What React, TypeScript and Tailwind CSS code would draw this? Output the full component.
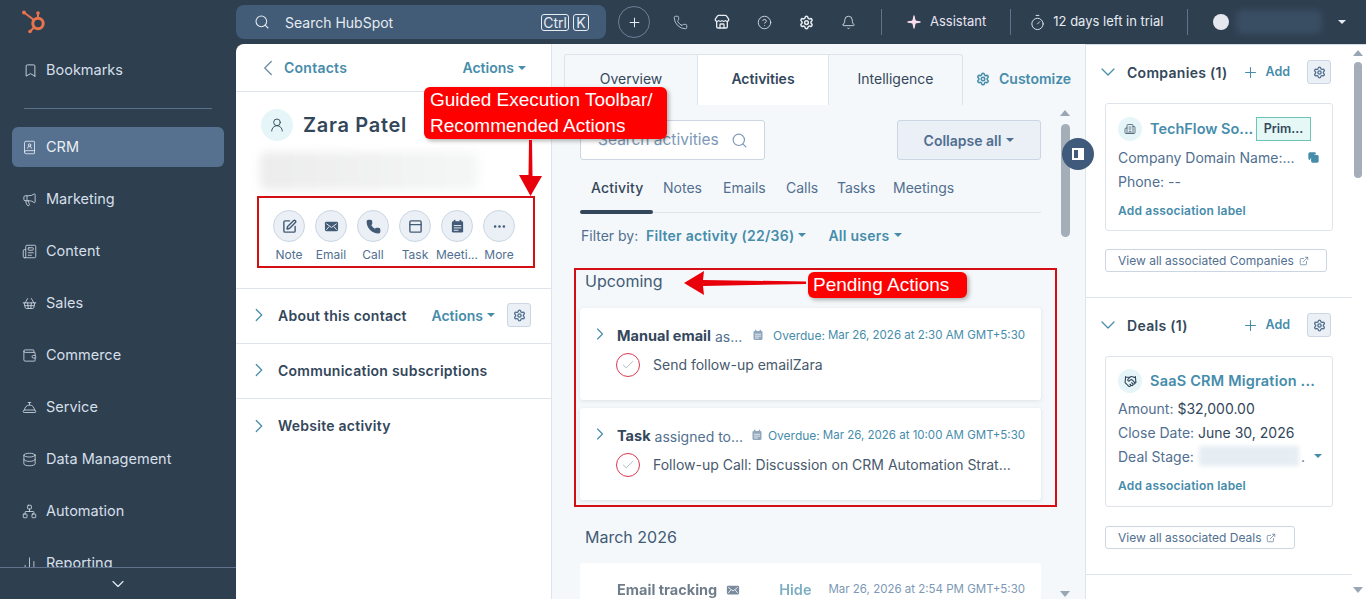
import React from 'react';
import {
  Bookmark, BookUser, Megaphone, Newspaper, ShoppingBasket, Wallet, ConciergeBell, Database, Network, ChartNoAxesColumn,
  ChevronDown, ChevronLeft, ChevronRight, Search, Plus, Phone, Store, CircleHelp, Settings, Bell, Timer, UserRound,
  SquarePen, Mail, Ellipsis, Check, Building2, Handshake, Copy, ExternalLink, Sparkle, PanelTop,
} from 'lucide-react';

const navItems = [
  { label: 'CRM', icon: BookUser, active: true },
  { label: 'Marketing', icon: Megaphone },
  { label: 'Content', icon: Newspaper },
  { label: 'Sales', icon: ShoppingBasket },
  { label: 'Commerce', icon: Wallet },
  { label: 'Service', icon: ConciergeBell },
  { label: 'Data Management', icon: Database },
  { label: 'Automation', icon: Network },
  { label: 'Reporting', icon: ChartNoAxesColumn },
];

const MailSolid = ({ size = 15 }: { size?: number }) => (
  <svg width={size} height={size} viewBox="0 0 16 16">
    <rect x="1" y="3" width="14" height="10" rx="1.5" fill="#425b76" />
    <path d="M2.5 5 L8 9 L13.5 5 M2.5 11.5 L5.5 8 M13.5 11.5 L10.5 8" fill="none" stroke="#eaf0f6" strokeWidth="1" />
  </svg>
);

const PhoneSolid = () => <Phone size={15} strokeWidth={2} fill="#425b76" className="text-[#425b76]" />;
const NoteIcon = () => <SquarePen size={15} strokeWidth={2.3} className="text-[#425b76]" />;
const TaskIcon = () => <PanelTop size={15} strokeWidth={2.2} className="text-[#425b76]" />;

const CalendarSolid = ({ size = 15, color = '#425b76', paper = '#eaf0f6' }: { size?: number; color?: string; paper?: string }) => (
  <svg width={size} height={size} viewBox="0 0 16 16">
    <rect x="4" y="1" width="1.8" height="3" fill={color} />
    <rect x="10.2" y="1" width="1.8" height="3" fill={color} />
    <rect x="2" y="2.5" width="12" height="12" rx="1.5" fill={color} />
    <path d="M4 7 H12 M4 9.5 H12 M4 12 H9" stroke={paper} strokeWidth="1" />
  </svg>
);

const quickActions = [
  { label: 'Note', icon: <NoteIcon /> },
  { label: 'Email', icon: <MailSolid /> },
  { label: 'Call', icon: <PhoneSolid /> },
  { label: 'Task', icon: <TaskIcon /> },
  { label: 'Meeti...', icon: <CalendarSolid /> },
  { label: 'More', icon: <Ellipsis size={15} strokeWidth={2.2} className="text-[#425b76]" /> },
];

const Caret = ({ className = 'border-t-[#468cab]' }: { className?: string }) => (
  <span className={`inline-block w-0 h-0 border-x-[4px] border-x-transparent border-t-[4px] ${className}`} />
);

const ScrollUp = () => <span className="block w-0 h-0 border-x-[5px] border-x-transparent border-b-[6px] border-b-[#99a6b3]" />;
const ScrollDown = () => <span className="block w-0 h-0 border-x-[5px] border-x-transparent border-t-[6px] border-t-[#99a6b3]" />;

const GearBox = () => (
  <div className="w-[24px] h-[24px] rounded-[3px] bg-[#eaf0f6] border border-[#cbd6e2] flex items-center justify-center">
    <Settings size={13} strokeWidth={2.5} className="text-[#516f90]" />
  </div>
);

const Sidebar = () => (
  <aside className="w-[236px] h-[599px] shrink-0 flex flex-col">
    <div className="h-[44px] shrink-0 pl-[20px] pt-[8px]">
      <svg width="28" height="28" viewBox="20 8 28 28" fill="none" stroke="#e9744c" strokeWidth="2">
        <circle cx="38" cy="23.5" r="5.2" strokeWidth="3" />
        <path d="M24 12.5 L34 20" />
        <path d="M38 13 V18" />
        <path d="M30 31.5 L34.5 27" />
        <circle cx="24" cy="12.5" r="2" fill="#e9744c" stroke="none" />
        <circle cx="38" cy="13" r="1.8" fill="#e9744c" stroke="none" />
        <circle cx="30" cy="31.5" r="1.8" fill="#e9744c" stroke="none" />
      </svg>
    </div>
    <div className="flex-1 min-h-0 overflow-hidden">
      <div className="h-[52px] pl-[23px] flex items-center gap-[8px] text-[#d5dfe9]">
        <Bookmark size={15} strokeWidth={1.4} className="shrink-0" />
        <span className="text-[14.5px]">Bookmarks</span>
      </div>
      <div className="mx-[24px] mt-[12px] mb-[18px] h-px bg-[#5a718a]" />
      <div className="flex flex-col gap-[12px] px-[12px]">
        {navItems.map(({ label, icon: Icon, active }) => (
          <div
            key={label}
            className={`h-[40px] shrink-0 rounded-[6px] pl-[10px] flex items-center gap-[9px] text-[14.5px] ${active ? 'bg-[#56708f] text-[#e9eff5]' : 'text-[#d5dfe9]'}`}
          >
            <Icon size={15} strokeWidth={1.3} className="shrink-0" />
            <span>{label}</span>
          </div>
        ))}
      </div>
    </div>
    <div className="h-[32px] shrink-0 border-t border-[#5f748c] flex items-center justify-center">
      <ChevronDown size={20} strokeWidth={1.4} className="text-[#e4ebf2]" />
    </div>
  </aside>
);

const TopBar = () => (
  <header className="h-[44px] shrink-0 flex items-center text-[#e6ecf2]">
    <div className="w-[370px] h-[34px] rounded-[8px] bg-[#425b76] flex items-center pl-[18px] pr-[17px]">
      <Search size={16} strokeWidth={1.6} />
      <span className="ml-[15px] text-[14px] flex-1">Search HubSpot</span>
      <span className="border border-[#e6ecf2] rounded-[3px] h-[17px] px-[1px] text-[14px] leading-[15px]">Ctrl</span>
      <span className="ml-[4px] border border-[#e6ecf2] rounded-[3px] h-[17px] w-[16px] text-center text-[14px] leading-[15px]">K</span>
    </div>
    <div className="ml-[12px] w-[32px] h-[32px] rounded-full border border-[#6b8199] flex items-center justify-center">
      <Plus size={15} strokeWidth={1.6} />
    </div>
    <Phone size={15} strokeWidth={1.3} className="ml-[23px] text-[#cfdae5]" />
    <Store size={16} strokeWidth={2} className="ml-[26px]" />
    <CircleHelp size={15} strokeWidth={1.4} className="ml-[27px] text-[#dbe4ed]" />
    <Settings size={15} strokeWidth={2.4} className="ml-[27px]" />
    <Bell size={15} strokeWidth={1.3} className="ml-[27px]" />
    <div className="ml-[25px] w-px h-[26px] bg-[#5f748c]" />
    <Sparkle size={16} fill="#fbdcec" strokeWidth={0} className="ml-[24px]" />
    <span className="ml-[8px] text-[13px] text-[#e8e4f0]">Assistant</span>
    <div className="ml-[24px] w-px h-[26px] bg-[#5f748c]" />
    <Timer size={17} strokeWidth={1.3} className="ml-[18px]" />
    <span className="ml-[7px] text-[13px]">12 days left in trial</span>
    <div className="ml-[24px] w-px h-[26px] bg-[#5f748c]" />
    <div className="ml-[25px] w-[16px] h-[16px] rounded-full bg-[#e4e8ee]" />
    <div className="ml-[7px] w-[86px] h-[24px] rounded-[6px] bg-[#3a4e63] blur-[3px]" />
    <Caret className="ml-[16px] border-t-[#e6ecf2]" />
  </header>
);

const RowChevron = () => <ChevronRight size={22} strokeWidth={1.3} className="shrink-0 text-[#468cab]" />;

const AccordionRow = ({ label, children }: { label: string; children?: React.ReactNode }) => (
  <div className="h-[55px] border-b border-[#dfe3eb] pl-[12px] pr-[20px] pb-[2px] flex items-center">
    <RowChevron />
    <span className="ml-[8px] text-[14px] font-semibold text-[#33475b] flex-1 tracking-[0.25px]">{label}</span>
    {children}
  </div>
);

const ContactPanel = () => (
  <section className="w-[316px] shrink-0 border-r border-[#dfe3eb] bg-white">
    <div className="h-[48px] border-b border-[#dfe3eb] pl-[19px] pr-[25px] flex items-center">
      <ChevronLeft size={26} strokeWidth={1.2} className="text-[#6a8ba3]" />
      <span className="ml-[3px] text-[14px] font-semibold text-[#468cab] flex-1 tracking-[0.25px]">Contacts</span>
      <span className="text-[14px] font-semibold text-[#468cab] mr-[4px]">Actions</span>
      <Caret />
    </div>
    <div className="pl-[25px] pt-[17px] flex items-center">
      <div className="w-[32px] h-[32px] rounded-full bg-[#e5f5f8] flex items-center justify-center">
        <UserRound size={16} strokeWidth={1.4} className="text-[#33475b]" />
      </div>
      <h1 className="ml-[10px] text-[20px] font-semibold text-[#33475b] tracking-[0.7px]">Zara Patel</h1>
    </div>
    <div className="ml-[24px] mt-[11px] h-[38px] w-[218px] bg-gradient-to-r from-[#ececec] to-[#f5f6f6] blur-[5px] rounded-[6px]" />
    <div className="mt-[20px] pl-[37px] flex gap-[10px] h-[78px]">
      {quickActions.map(({ label, icon }) => (
        <div key={label} className="w-[32px] flex flex-col items-center">
          <div className="w-[32px] h-[32px] shrink-0 rounded-full bg-[#eaf0f6] border border-[#cbd6e2] flex items-center justify-center">
            {icon}
          </div>
          <span className="mt-[4px] text-[12px] text-[#516f90] whitespace-nowrap">{label}</span>
        </div>
      ))}
    </div>
    <div className="border-t border-[#dfe3eb]" />
    <AccordionRow label="About this contact">
      <span className="text-[14px] font-semibold text-[#468cab] mr-[4px]">Actions</span>
      <Caret />
      <div className="ml-[12px]"><GearBox /></div>
    </AccordionRow>
    <AccordionRow label="Communication subscriptions" />
    <div className="h-[55px] pl-[12px] pb-[2px] flex items-center">
      <RowChevron />
      <span className="ml-[8px] text-[14px] font-semibold text-[#33475b] tracking-[0.25px]">Website activity</span>
    </div>
  </section>
);

const TaskCard = ({ title, rest, calGap, date, task }: { title: string; rest: string; calGap: string; date: string; task: string }) => (
  <div className="h-[92px] rounded-[3px] bg-white shadow-[0_1px_4px_rgba(45,62,80,0.12)] pl-[10px] pr-[16px] pt-[18px]">
    <div className="h-[20px] flex items-center whitespace-nowrap">
      <ChevronRight size={20} strokeWidth={1.4} className="shrink-0 -mt-[4px] text-[#468cab]" />
      <span className="ml-[7px] text-[14.5px] font-bold text-[#33475b]">{title}</span>
      <span className="ml-[4px] text-[14px] text-[#516f90]">{rest}</span>
      <span className={`shrink-0 -mt-[2px] ${calGap}`}><CalendarSolid size={12} color="#8fa6bd" paper="#ffffff" /></span>
      <span className="ml-auto text-[12px] text-[#468cab]">Overdue:</span>
      <span className="ml-[3px] text-[11.5px] text-[#468cab]">{date}</span>
    </div>
    <div className="mt-[7px] ml-[26px] h-[24px] flex items-center">
      <div className="w-[24px] h-[24px] rounded-full border border-[#d9394f] flex items-center justify-center">
        <Check size={14} strokeWidth={1.2} className="text-[#8a9aab]" />
      </div>
      <span className="ml-[13px] pb-[1px] text-[14px] text-[#47596d] whitespace-nowrap">{task}</span>
    </div>
  </div>
);

const ActivityPanel = () => (
  <section className="w-[533px] shrink-0 bg-[#f5f8fa] flex flex-col min-h-0">
    <div className="h-[61px] shrink-0 pt-[10px] pl-[12px] flex items-start">
      <div className="flex h-[51px] border border-b-0 border-[#dfe3eb] text-[14px] text-[#33475b] rounded-t-[3px]">
        <div className="w-[132px] pb-[4px] flex items-center justify-center">Overview</div>
        <div className="w-[132px] pb-[4px] flex items-center justify-center bg-white border-x border-[#dfe3eb] font-semibold">Activities</div>
        <div className="w-[133px] pb-[4px] flex items-center justify-center">Intelligence</div>
      </div>
      <div className="ml-[13px] h-[51px] pb-[2px] flex items-center gap-[9px] text-[#468cab] text-[14px] font-semibold">
        <Settings size={14} strokeWidth={2.6} />
        <span>Customize</span>
      </div>
    </div>
    <div className="flex-1 min-h-0 flex">
      <div className="w-[505px] shrink-0 pl-[28px] pr-[16px] pt-[15px] overflow-hidden">
        <div className="flex justify-between h-[40px]">
          <div className="w-[185px] bg-white border border-[#cbd6e2] rounded-[3px] flex items-center pl-[17px] pr-[16px]">
            <span className="text-[15.5px] text-[#7c98b6] flex-1 whitespace-nowrap overflow-hidden">Search activities</span>
            <Search size={17} strokeWidth={1.6} className="ml-[10px] shrink-0 text-[#7c98b6]" />
          </div>
          <div className="w-[144px] bg-[#eaf0f6] border border-[#cbd6e2] rounded-[3px] flex items-center justify-center gap-[5px] text-[14px] font-semibold text-[#506e91]">
            Collapse all <Caret className="border-t-[#506e91]" />
          </div>
        </div>
        <div className="mt-[16px] h-[36px] flex text-[14px] text-[#516f90] leading-[24px]">
          <span className="ml-[11px] w-[72px] font-medium text-[#33475b] tracking-[0.2px]">Activity</span>
          <span className="w-[60px]">Notes</span>
          <span className="w-[63px]">Emails</span>
          <span className="w-[51px]">Calls</span>
          <span className="w-[56px]">Tasks</span>
          <span>Meetings</span>
        </div>
        <div className="relative h-px bg-[#dfe3eb]">
          <div className="absolute left-0 -top-[2px] w-[73px] h-[4px] rounded-full bg-[#33475b]" />
        </div>
        <div className="mt-[10px] h-[24px] flex items-center text-[14px] whitespace-nowrap">
          <span className="ml-[1px] w-[65px] text-[#516f90]">Filter by:</span>
          <span className="font-semibold text-[#468cab] mr-[4px] tracking-[0.25px]">Filter activity (22/36)</span>
          <Caret />
          <span className="ml-[22px] font-semibold text-[#468cab] mr-[4px] tracking-[0.25px]">All users</span>
          <Caret />
        </div>
        <h2 className="mt-[22px] ml-[5px] text-[16px] leading-[24px] text-[#425b76]">Upcoming</h2>
        <div className="mt-[15px] flex flex-col gap-[8px]">
          <TaskCard title="Manual email" rest="as..." calGap="ml-[10px]" date="Mar 26, 2026 at 2:30 AM GMT+5:30" task="Send follow-up emailZara" />
          <TaskCard title="Task" rest="assigned to..." calGap="ml-[8px]" date="Mar 26, 2026 at 10:00 AM GMT+5:30" task="Follow-up Call: Discussion on CRM Automation Strat..." />
        </div>
        <h2 className="mt-[25px] ml-[5px] text-[16px] leading-[24px] text-[#425b76]">March 2026</h2>
        <div className="mt-[14px] h-[54px] rounded-t-[3px] bg-white pl-[37px] pr-[16px] flex items-center whitespace-nowrap">
          <span className="text-[14.5px] font-bold text-[#33475b] opacity-70">Email tracking</span>
          <span className="ml-[9px] opacity-70"><MailSolid size={14} /></span>
          <span className="ml-[39px] text-[14.5px] font-semibold text-[#468cab] opacity-70">Hide</span>
          <span className="ml-auto text-[11.5px] text-[#7c98b6]">Mar 26, 2026 at 2:54 PM GMT+5:30</span>
        </div>
      </div>
      <div className="w-[16px] flex flex-col items-center pt-[5px] pb-[2px]">
        <ScrollUp />
        <div className="mt-[8px] w-[9px] h-[113px] rounded-full bg-[#a3aeb9]" />
        <div className="mt-auto"><ScrollDown /></div>
      </div>
    </div>
  </section>
);

const SideCard = ({ className, children }: { className: string; children: React.ReactNode }) => (
  <div className={`ml-[19px] w-[228px] border border-[#dfe3eb] rounded-[3px] pl-[12px] text-[14px] text-[#516f90] ${className}`}>{children}</div>
);

const SectionHead = ({ label, className }: { label: string; className: string }) => (
  <div className={`h-[24px] pl-[10px] mr-[21px] flex items-center ${className}`}>
    <ChevronDown size={24} strokeWidth={1.3} className="text-[#468cab]" />
    <span className="ml-[7px] flex-1 text-[14px] font-semibold text-[#33475b] tracking-[0.3px]">{label}</span>
    <Plus size={17} strokeWidth={1.5} className="text-[#468cab]" />
    <span className="ml-[6px] mr-[17px] text-[12.5px] font-semibold text-[#468cab]">Add</span>
    <GearBox />
  </div>
);

const ViewAll = ({ label, className }: { label: string; className: string }) => (
  <div className={`ml-[19px] h-[23px] border border-[#cbd6e2] rounded-[3px] pl-[12px] flex items-center gap-[5px] text-[12px] text-[#516f90] ${className}`}>
    {label}
    <ExternalLink size={10} strokeWidth={1.6} />
  </div>
);

const AssocLink = ({ className }: { className: string }) => (
  <div className={`text-[12px] font-semibold text-[#468cab] tracking-[0.2px] ${className}`}>Add association label</div>
);

const RightPanel = () => (
  <section className="flex-1 min-w-0 bg-white border-l border-[#dfe3eb] border-t border-t-[#cfdbe6] flex">
    <div className="w-[266px] shrink-0 pt-[15px]">
      <SectionHead label="Companies (1)" className="" />
      <SideCard className="mt-[19px] h-[128px] pt-[13px]">
        <div className="flex items-center h-[24px]">
          <div className="w-[24px] h-[24px] rounded-full bg-[#e5f5f8] flex items-center justify-center">
            <Building2 size={12} strokeWidth={1.4} className="text-[#33475b]" />
          </div>
          <span className="ml-[8px] w-[106px] text-[14.5px] font-semibold text-[#468cab] whitespace-nowrap">TechFlow So...</span>
          <span className="w-[55px] h-[24px] border border-[#6cc4b6] bg-[#e5f8f6] text-[12.5px] font-semibold text-[#33475b] flex items-center justify-center">Prim...</span>
        </div>
        <div className="mt-[6px] h-[20px] flex items-center whitespace-nowrap">
          Company Domain Name:...
          <Copy size={11} strokeWidth={2.4} fill="#468cab" className="ml-[13px] text-[#468cab]" />
        </div>
        <div className="mt-[5px] h-[20px] leading-[20px]">Phone: --</div>
        <AssocLink className="mt-[10px]" />
      </SideCard>
      <ViewAll label="View all associated Companies" className="mt-[18px] w-[222px]" />
      <div className="mt-[25px] border-t border-[#dfe3eb]" />
      <SectionHead label="Deals (1)" className="mt-[15px]" />
      <SideCard className="mt-[19px] h-[151px] pt-[12px]">
        <div className="flex items-center h-[24px]">
          <div className="w-[24px] h-[24px] rounded-full bg-[#e5f5f8] flex items-center justify-center">
            <Handshake size={13} strokeWidth={2} className="text-[#33475b]" />
          </div>
          <span className="ml-[8px] text-[14.5px] font-semibold text-[#468cab] whitespace-nowrap tracking-[0.2px]">SaaS CRM Migration ...</span>
        </div>
        <div className="mt-[6px] h-[20px] leading-[20px]">Amount: <span className="text-[#33475b]">$32,000.00</span></div>
        <div className="mt-[4px] h-[20px] leading-[20px]">Close Date: <span className="text-[#33475b]">June 30, 2026</span></div>
        <div className="mt-[3px] h-[20px] flex items-center">
          Deal Stage:
          <div className="ml-[5px] w-[100px] h-[20px] bg-[#e6edf3] blur-[2px] rounded-[2px]" />
          <span className="ml-[2px]">.</span>
          <Caret className="ml-[9px] border-t-[#468cab]" />
        </div>
        <AssocLink className="mt-[11px]" />
      </SideCard>
      <ViewAll label="View all associated Deals" className="mt-[19px] w-[190px]" />
      <div className="mt-[25px] border-t border-[#dfe3eb]" />
    </div>
    <div className="ml-[2px] w-[8px] flex flex-col items-center pt-[5px] pb-[6px]">
      <ScrollUp />
      <div className="mt-[6px] w-[8px] h-[116px] rounded-full bg-[#a3aeb9]" />
      <div className="mt-auto"><ScrollDown /></div>
    </div>
  </section>
);

const Callout = ({ className, children }: { className: string; children: React.ReactNode }) => (
  <div className={`absolute bg-[#ff0000] rounded-[6px] shadow-[2px_2px_4px_rgba(0,0,0,0.3)] text-white text-[19px] font-['Liberation_Sans',sans-serif] ${className}`}>{children}</div>
);

const Annotations = () => (
  <>
    <div className="absolute left-[257px] top-[196px] w-[278px] h-[72px] border-2 border-[#d40f14]" />
    <div className="absolute left-[574px] top-[268px] w-[483px] h-[239px] border-2 border-[#d40f14]" />
    <Callout className="left-[424px] top-[87px] w-[243px] h-[52px] pl-[6px] leading-[26px]">
      Guided Execution Toolbar/<br />Recommended Actions
    </Callout>
    <Callout className="left-[808px] top-[272px] w-[159px] h-[26px] pl-[5px] leading-[26px]">Pending Actions</Callout>
    <svg className="absolute left-[515px] top-[139px]" width="32" height="58" viewBox="0 0 32 58">
      <path d="M14 1 H17 L17.5 37 H27 L15.5 57 L4 36 H13.5 Z" fill="#e8000b" />
    </svg>
    <svg className="absolute left-[684px] top-[270px]" width="124" height="26" viewBox="0 0 124 26">
      <path d="M0 13 L20 1 L19 10 L122 11.5 V14 L19 16 L20 25 Z" fill="#e8000b" />
    </svg>
    <div className="absolute left-[1062px] top-[138px] w-[32px] h-[32px] rounded-full bg-[#3f5a7a] flex items-center justify-center">
      <div className="w-[12px] h-[12px] bg-white pl-[2px] pt-[2px]">
        <div className="w-[4px] h-[8px] bg-[#3f5a7a]" />
      </div>
    </div>
  </>
);

const App: React.FC = () => (
  <div className="relative w-[1366px] h-[599px] overflow-hidden bg-[#2e3f50] flex font-['Inter',sans-serif]">
    <Sidebar />
    <div className="flex-1 min-w-0 flex flex-col">
      <TopBar />
      <main className="flex-1 min-h-0 flex rounded-tl-[8px] overflow-hidden">
        <ContactPanel />
        <ActivityPanel />
        <RightPanel />
      </main>
    </div>
    <Annotations />
  </div>
);

export default App;
